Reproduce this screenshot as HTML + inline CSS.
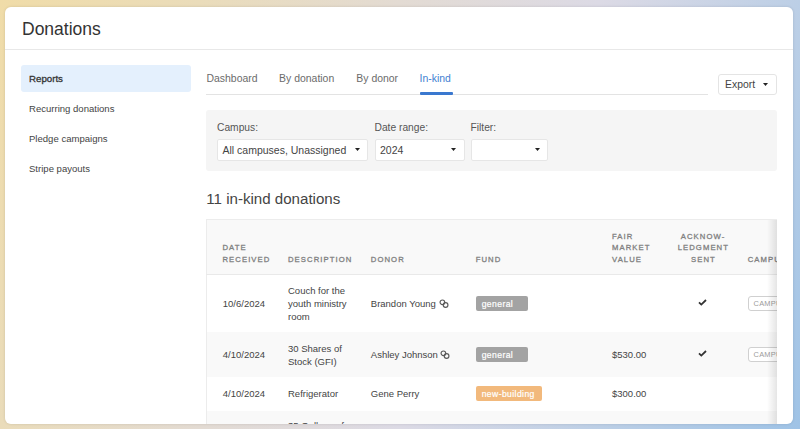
<!DOCTYPE html>
<html><head><meta charset="utf-8"><style>
html,body{margin:0;padding:0;width:800px;height:429px;overflow:hidden}
body{background:linear-gradient(115deg,#f0dca8 0%,#eadcba 20%,#e3dbd3 40%,#dcdae5 60%,#bccfe6 80%,#9fc3e6 100%);position:relative;font-family:"Liberation Sans",sans-serif}
.shadow{position:absolute;left:5px;top:7px;width:788px;height:417px;border-radius:6px;box-shadow:0 0 3px rgba(0,0,0,0.12)}
.page{position:absolute;left:0;top:0;width:800px;height:429px;background:#fff;clip-path:inset(7px 7px 5px 5px round 6px)}
.t{position:absolute;white-space:nowrap}
.r{position:absolute}
</style></head><body>
<div class="shadow"></div>
<div class="page">
<div class="t" style="left:22px;top:19px;font-size:17.5px;line-height:20px;color:#333;">Donations</div>
<div class="r" style="left:5px;top:49px;width:788px;height:1px;background:#e8e8e8"></div>
<div class="r" style="left:21px;top:65px;width:169.5px;height:27px;background:#e4f0fd;border-radius:3px"></div>
<div class="t" style="left:29px;top:73px;font-size:9.7px;line-height:11px;color:#333;-webkit-text-stroke:0.3px #333">Reports</div>
<div class="t" style="left:29px;top:103px;font-size:9.55px;line-height:11px;color:#444;">Recurring donations</div>
<div class="t" style="left:29px;top:133px;font-size:9.55px;line-height:11px;color:#444;">Pledge campaigns</div>
<div class="t" style="left:29px;top:163px;font-size:9.55px;line-height:11px;color:#444;">Stripe payouts</div>
<div class="t" style="left:206.5px;top:73.2px;font-size:10.45px;line-height:11px;color:#6b6b6b;">Dashboard</div>
<div class="t" style="left:279.1px;top:73.2px;font-size:10.45px;line-height:11px;color:#6b6b6b;">By donation</div>
<div class="t" style="left:356.3px;top:73.2px;font-size:10.45px;line-height:11px;color:#6b6b6b;">By donor</div>
<div class="t" style="left:419.5px;top:73.2px;font-size:10.45px;line-height:11px;color:#3f7fd1;">In-kind</div>
<div class="r" style="left:206px;top:94px;width:501.5px;height:1px;background:#e3e3e3"></div>
<div class="r" style="left:419.5px;top:92px;width:33.0px;height:2.5px;background:#3a78cf;border-radius:1px"></div>
<div class="r" style="left:718px;top:74px;width:59px;height:20.5px;border:1px solid #e4e4e4;border-radius:3px;box-sizing:border-box;background:#fff"></div>
<div class="t" style="left:725px;top:79.3px;font-size:10.4px;line-height:11px;color:#444;">Export</div>
<svg width="5" height="3" viewBox="0 0 5 3" style="position:absolute;left:762.8px;top:83px"><path d="M0 0H5L2.5 3Z" fill="#222"/></svg>
<div class="r" style="left:206px;top:110px;width:571px;height:61px;background:#f5f5f5;border-radius:3px"></div>
<div class="t" style="left:217px;top:121.8px;font-size:10.25px;line-height:11px;color:#555;">Campus:</div>
<div class="t" style="left:374.5px;top:121.8px;font-size:10.25px;line-height:11px;color:#555;">Date range:</div>
<div class="t" style="left:470.5px;top:121.8px;font-size:10.25px;line-height:11px;color:#555;">Filter:</div>
<div class="r" style="left:217px;top:138.5px;width:151.3px;height:22.0px;background:#fff;border:1px solid #e6e6e6;border-radius:2px;box-sizing:border-box"></div>
<div class="r" style="left:374.5px;top:138.5px;width:90.0px;height:22.0px;background:#fff;border:1px solid #e6e6e6;border-radius:2px;box-sizing:border-box"></div>
<div class="r" style="left:470.5px;top:138.5px;width:77.5px;height:22.0px;background:#fff;border:1px solid #e6e6e6;border-radius:2px;box-sizing:border-box"></div>
<div class="t" style="left:222.5px;top:143.5px;font-size:10.5px;line-height:12px;color:#444;">All campuses, Unassigned</div>
<div class="t" style="left:380px;top:143.5px;font-size:10.5px;line-height:12px;color:#444;">2024</div>
<svg width="5" height="3" viewBox="0 0 5 3" style="position:absolute;left:355px;top:148px"><path d="M0 0H5L2.5 3Z" fill="#222"/></svg>
<svg width="5" height="3" viewBox="0 0 5 3" style="position:absolute;left:451px;top:148px"><path d="M0 0H5L2.5 3Z" fill="#222"/></svg>
<svg width="5" height="3" viewBox="0 0 5 3" style="position:absolute;left:535px;top:148px"><path d="M0 0H5L2.5 3Z" fill="#222"/></svg>
<div class="t" style="left:206.3px;top:189.6px;font-size:15.1px;line-height:17px;color:#444;">11 in-kind donations</div>
<div class="r" style="left:206px;top:219px;width:571px;height:210px;overflow:hidden">
<div class="r" style="left:0px;top:0px;width:694px;height:55.5px;background:#f9f9f9;border-top:1px solid #ececec;border-left:1px solid #ececec;box-sizing:border-box"></div>
<div class="r" style="left:0px;top:55px;width:694px;height:1px;background:#e9e9e9"></div>
<div class="r" style="left:0px;top:113px;width:694px;height:44.5px;background:#f9f9f9"></div>
<div class="r" style="left:0px;top:191.75px;width:694px;height:29.25px;background:#f9f9f9"></div>
<div class="r" style="left:0px;top:56px;width:1px;height:165px;background:#ececec"></div>
<div class="t" style="left:16.5px;top:24px;font-size:7.7px;line-height:9px;color:#808080;letter-spacing:1.07px;-webkit-text-stroke:0.3px #808080">DATE</div>
<div class="t" style="left:16.5px;top:35.5px;font-size:7.7px;line-height:9px;color:#808080;letter-spacing:1.07px;-webkit-text-stroke:0.3px #808080">RECEIVED</div>
<div class="t" style="left:82px;top:35.5px;font-size:7.7px;line-height:9px;color:#808080;letter-spacing:1.07px;-webkit-text-stroke:0.3px #808080">DESCRIPTION</div>
<div class="t" style="left:164.8px;top:35.5px;font-size:7.7px;line-height:9px;color:#808080;letter-spacing:1.07px;-webkit-text-stroke:0.3px #808080">DONOR</div>
<div class="t" style="left:269.7px;top:35.5px;font-size:7.7px;line-height:9px;color:#808080;letter-spacing:1.07px;-webkit-text-stroke:0.3px #808080">FUND</div>
<div class="t" style="left:406px;top:13.3px;font-size:7.7px;line-height:9px;color:#808080;letter-spacing:1.07px;-webkit-text-stroke:0.3px #808080">FAIR</div>
<div class="t" style="left:406px;top:24.4px;font-size:7.7px;line-height:9px;color:#808080;letter-spacing:1.07px;-webkit-text-stroke:0.3px #808080">MARKET</div>
<div class="t" style="left:406px;top:35.6px;font-size:7.7px;line-height:9px;color:#808080;letter-spacing:1.07px;-webkit-text-stroke:0.3px #808080">VALUE</div>
<div class="t" style="left:474.8px;top:13.3px;font-size:7.7px;line-height:9px;color:#808080;letter-spacing:1.07px;-webkit-text-stroke:0.3px #808080">ACKNOW-</div>
<div class="t" style="left:471.7px;top:24.4px;font-size:7.7px;line-height:9px;color:#808080;letter-spacing:1.07px;-webkit-text-stroke:0.3px #808080">LEDGMENT</div>
<div class="t" style="left:485px;top:35.6px;font-size:7.7px;line-height:9px;color:#808080;letter-spacing:1.07px;-webkit-text-stroke:0.3px #808080">SENT</div>
<div class="t" style="left:541.7px;top:35.6px;font-size:7.7px;line-height:9px;color:#808080;letter-spacing:1.07px;-webkit-text-stroke:0.3px #808080">CAMPUS</div>
<div class="t" style="left:16.8px;top:79px;font-size:9.5px;line-height:11px;color:#444;">10/6/2024</div>
<div class="t" style="left:82px;top:66px;font-size:9.5px;line-height:11px;color:#444;">Couch for the</div>
<div class="t" style="left:82px;top:79px;font-size:9.5px;line-height:11px;color:#444;">youth ministry</div>
<div class="t" style="left:82px;top:92px;font-size:9.5px;line-height:11px;color:#444;">room</div>
<div class="t" style="left:164.8px;top:79px;font-size:9.5px;line-height:11px;color:#444;">Brandon Young</div>
<svg width="10" height="9" viewBox="0 0 10 9" style="position:absolute;left:232.5px;top:80px"><circle cx="3.4" cy="3.3" r="2.35" fill="none" stroke="#5a5a5a" stroke-width="1.15"/><circle cx="6.6" cy="6" r="2.35" fill="none" stroke="#5a5a5a" stroke-width="1.15"/></svg>
<div class="r" style="left:270px;top:77px;width:52px;height:15px;background:#a3a3a3;border-radius:2px"></div>
<div class="t" style="left:275.7px;top:79.8px;font-size:8.6px;line-height:10px;color:#fff;letter-spacing:0.4px;-webkit-text-stroke:0.2px #fff">general</div>
<svg width="9" height="7" viewBox="0 0 9 7" style="position:absolute;left:492px;top:80px"><path d="M1 3.4L3.3 5.6L8 1" fill="none" stroke="#333" stroke-width="1.8"/></svg>
<div class="r" style="left:541.5px;top:77.3px;width:52.5px;height:15.0px;border:1.5px solid #d0d0d0;border-radius:3px;box-sizing:border-box;background:#fff"></div>
<div class="t" style="left:547.5px;top:80.3px;font-size:7.4px;line-height:9px;color:#9c9c9c;letter-spacing:0.3px;">CAMPUS</div>
<div class="t" style="left:16.8px;top:130px;font-size:9.5px;line-height:11px;color:#444;">4/10/2024</div>
<div class="t" style="left:82px;top:124px;font-size:9.5px;line-height:11px;color:#444;">30 Shares of</div>
<div class="t" style="left:82px;top:137px;font-size:9.5px;line-height:11px;color:#444;">Stock (GFI)</div>
<div class="t" style="left:164.8px;top:130px;font-size:9.5px;line-height:11px;color:#444;">Ashley Johnson</div>
<svg width="10" height="9" viewBox="0 0 10 9" style="position:absolute;left:234.2px;top:131px"><circle cx="3.4" cy="3.3" r="2.35" fill="none" stroke="#5a5a5a" stroke-width="1.15"/><circle cx="6.6" cy="6" r="2.35" fill="none" stroke="#5a5a5a" stroke-width="1.15"/></svg>
<div class="r" style="left:270px;top:128px;width:52px;height:15px;background:#a3a3a3;border-radius:2px"></div>
<div class="t" style="left:275.7px;top:130.8px;font-size:8.6px;line-height:10px;color:#fff;letter-spacing:0.4px;-webkit-text-stroke:0.2px #fff">general</div>
<div class="t" style="left:406px;top:130px;font-size:9.5px;line-height:11px;color:#444;">$530.00</div>
<svg width="9" height="7" viewBox="0 0 9 7" style="position:absolute;left:492px;top:131px"><path d="M1 3.4L3.3 5.6L8 1" fill="none" stroke="#333" stroke-width="1.8"/></svg>
<div class="r" style="left:541.5px;top:128px;width:52.5px;height:15px;border:1.5px solid #d0d0d0;border-radius:3px;box-sizing:border-box;background:#fff"></div>
<div class="t" style="left:547.5px;top:131px;font-size:7.4px;line-height:9px;color:#9c9c9c;letter-spacing:0.3px;">CAMPUS</div>
<div class="t" style="left:16.8px;top:169px;font-size:9.5px;line-height:11px;color:#444;">4/10/2024</div>
<div class="t" style="left:82px;top:169px;font-size:9.5px;line-height:11px;color:#444;">Refrigerator</div>
<div class="t" style="left:164.8px;top:169px;font-size:9.5px;line-height:11px;color:#444;">Gene Perry</div>
<div class="r" style="left:270px;top:167.3px;width:65.5px;height:15.0px;background:#f2b97c;border-radius:2px"></div>
<div class="t" style="left:275.7px;top:170.1px;font-size:8.6px;line-height:10px;color:#fff;letter-spacing:0.4px;-webkit-text-stroke:0.2px #fff">new-building</div>
<div class="t" style="left:406px;top:169px;font-size:9.5px;line-height:11px;color:#444;">$300.00</div>
<div class="t" style="left:82px;top:201px;font-size:9.5px;line-height:11px;color:#444;">35 Gallons of</div>
</div>
<div class="r" style="left:767px;top:219.5px;width:10px;height:209.5px;background:linear-gradient(to right, rgba(0,0,0,0), rgba(0,0,0,0.1))"></div>
</div>
</body></html>
